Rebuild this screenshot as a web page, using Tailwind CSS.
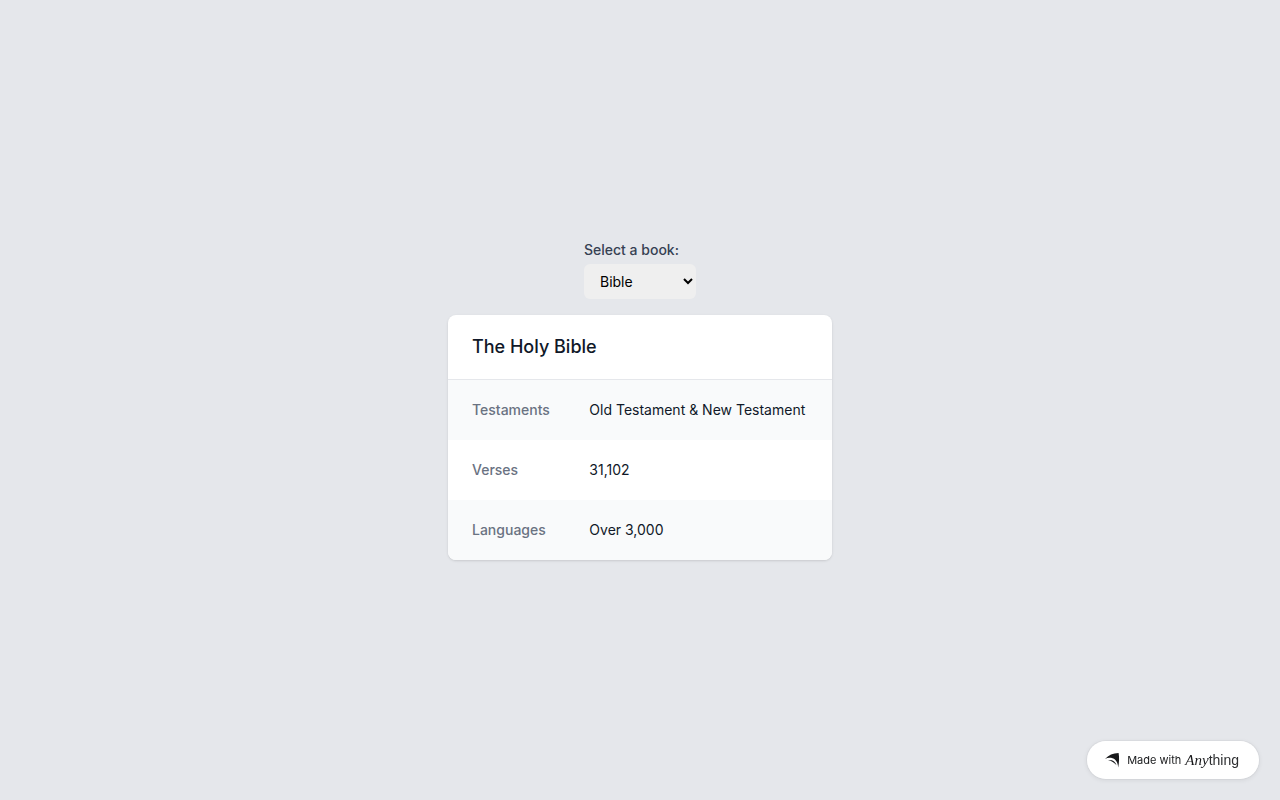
<!DOCTYPE html>
<html lang="en">
<head>
    <meta charset="UTF-8">
    <meta name="viewport" content="width=device-width, initial-scale=1.0">
    <title>Book Details</title>
    <script src="https://cdn.jsdelivr.net/npm/@tailwindcss/browser@4"></script>
</head>
<body class="bg-gray-200 font-['Inter',sans-serif]">
<main class="flex flex-col items-center justify-center min-h-screen">
    <!-- Book picker -->
    <div class="mb-4">
        <label for="book" class="block mb-1 text-sm font-medium text-gray-700">Select a book:</label>
        <select id="book" class="block w-28 h-[35px] px-3 rounded-md bg-[#efefef] text-sm text-black">
            <option value="bible" selected>Bible</option>
            <option value="quran">Quran</option>
            <option value="torah">Torah</option>
        </select>
    </div>

    <!-- Book details -->
    <div class="w-full max-w-sm overflow-hidden bg-white rounded-lg shadow-sm">
        <div class="px-6 py-5">
            <h3 id="title" class="text-lg leading-6 font-medium text-gray-900">The Holy Bible</h3>
        </div>
        <dl class="border-t border-gray-200 text-sm">
            <div class="grid grid-cols-3 gap-4 px-6 py-5 bg-gray-50">
                <dt class="font-medium text-gray-500">Testaments</dt>
                <dd class="col-span-2 text-gray-900">Old Testament &amp; New Testament</dd>
            </div>
            <div class="grid grid-cols-3 gap-4 px-6 py-5 bg-white">
                <dt class="font-medium text-gray-500">Verses</dt>
                <dd class="col-span-2 text-gray-900">31,102</dd>
            </div>
            <div class="grid grid-cols-3 gap-4 px-6 py-5 bg-gray-50">
                <dt class="font-medium text-gray-500">Languages</dt>
                <dd class="col-span-2 text-gray-900">Over 3,000</dd>
            </div>
        </dl>
    </div>
</main>

<!-- Badge -->
<a href="#" class="fixed bottom-5 right-5 flex items-center h-10 pl-[18px] pr-5 rounded-full border border-black/3 bg-white bg-clip-padding shadow-[0_1px_4px_rgba(0,0,0,0.06)] text-[#18191b]">
    <svg class="w-4 h-4 mr-1.5" viewBox="0 0 16 16" fill="currentColor" aria-hidden="true">
        <path d="M0 7C3.500 3 8 1 13.600 1C14.400 5.500 14.200 10.500 13.200 15.500C13 10.500 10.400 6.500 6 5.800C3.800 5.500 1.800 6 0 7Z"/>
        <path d="M3 8C7 7.400 10.200 9 11.600 13.200C9.300 10.600 6.500 8.900 3 8Z"/>
    </svg>
    <span class="text-[11px]">Made with</span>
    <span class="flex items-baseline ml-1 leading-5">
        <span class="text-[15px] italic font-['Liberation_Serif',serif]">Any</span>
        <span class="text-sm font-['Liberation_Sans',sans-serif] text-[#2e2f31]">thing</span>
    </span>
</a>
</body>
</html>
